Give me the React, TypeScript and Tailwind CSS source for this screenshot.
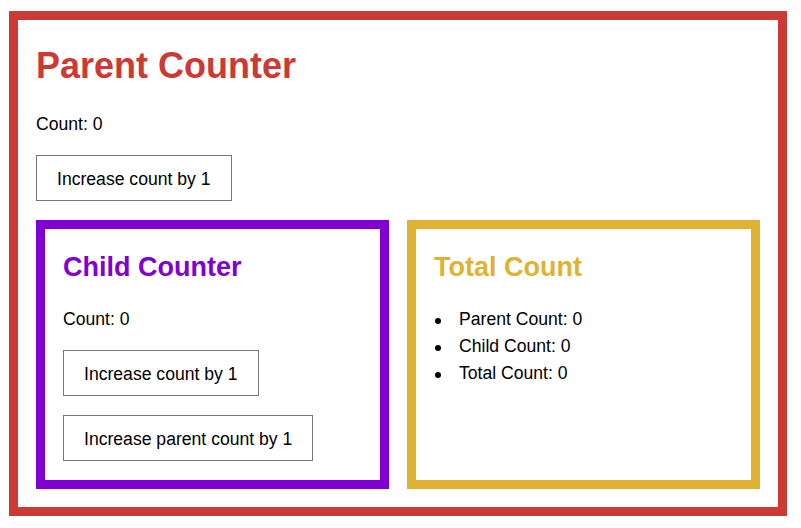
import React from "react";

function Btn({ children, className = "" }: { children: React.ReactNode; className?: string }) {
  return (
    <button
      className={
        "block border border-[#767676] bg-white px-[20px] pt-[13px] pb-[11px] text-[17.6px] leading-[20px] text-black " +
        className
      }
    >
      {children}
    </button>
  );
}

export default function App() {
  const items = ["Parent Count: 0", "Child Count: 0", "Total Count: 0"];
  return (
    <div className="min-h-[528px] bg-white pl-[9px] pt-[11px] font-['Liberation_Sans',Arial,sans-serif] text-black">
      <div className="w-[778px] border-[9px] border-[#cc3a36] p-[18px]">
        <h1 className="mt-[8px] text-[36px] leading-[40px] font-bold text-[#cc3a36]">Parent Counter</h1>
        <p className="mt-[25px] text-[17.6px] leading-[27px]">Count: 0</p>
        <Btn className="mt-[17px]">Increase count by 1</Btn>
        <div className="mt-[19px] flex gap-[18px]">
          <div className="flex-1 border-[9px] border-[#8000d4] px-[18px] pt-[18px] pb-[19px]">
            <h2 className="mt-[5px] text-[27px] leading-[31px] font-bold text-[#8000d4]">Child Counter</h2>
            <p className="mt-[23px] text-[17.6px] leading-[27px]">Count: 0</p>
            <Btn className="mt-[17px]">Increase count by 1</Btn>
            <Btn className="mt-[19px]">Increase parent count by 1</Btn>
          </div>
          <div className="flex-1 border-[9px] border-[#e0b233] px-[18px] pt-[18px] pb-[19px]">
            <h2 className="mt-[5px] text-[27px] leading-[31px] font-bold text-[#e0b233]">Total Count</h2>
            <ul className="mt-[23px]">
              {items.map((t) => (
                <li key={t} className="flex items-start text-[17.6px] leading-[27px]">
                  <span className="ml-[1px] mr-[18px] mt-[12px] h-[6px] w-[6px] shrink-0 rounded-full bg-black" />
                  <span>{t}</span>
                </li>
              ))}
            </ul>
          </div>
        </div>
      </div>
    </div>
  );
}
